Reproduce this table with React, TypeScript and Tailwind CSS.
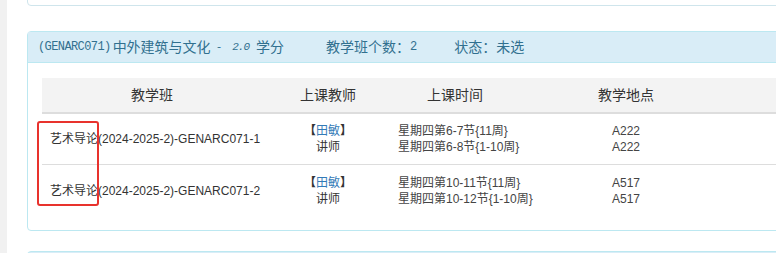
import React from "react";

const cjk = '"Liberation Sans", "Noto Sans CJK SC", sans-serif';
const mono = '"Liberation Mono", "Noto Sans CJK SC", monospace';

type Row = {
  name: string;
  times: string[];
  rooms: string[];
};

const rows: Row[] = [
  {
    name: "艺术导论(2024-2025-2)-GENARC071-1",
    times: ["星期四第6-7节{11周}", "星期四第6-8节{1-10周}"],
    rooms: ["A222", "A222"],
  },
  {
    name: "艺术导论(2024-2025-2)-GENARC071-2",
    times: ["星期四第10-11节{11周}", "星期四第10-12节{1-10周}"],
    rooms: ["A517", "A517"],
  },
];

function CourseTable() {
  return (
    <div className="relative w-[740px]">
      {/* header */}
      <div className="flex h-[36px] items-center border-b-2 border-[#dddddd] bg-[#f3f3f3] text-[14px] text-[#333]">
        <div className="w-[220px] text-center">教学班</div>
        <div className="w-[132px] text-center">上课教师</div>
        <div className="w-[122px] text-center">上课时间</div>
        <div className="w-[220px] text-center">教学地点</div>
      </div>
      {rows.map((r, i) => (
        <div
          key={r.name}
          className={
            "flex h-[51px] items-center text-[12px] leading-[16px] text-[#333] " +
            (i === 0 ? "border-b border-[#dddddd]" : "")
          }
        >
          <div className="w-[220px] pl-[8px]">{r.name}</div>
          <div className="flex w-[132px] flex-col items-center">
            <div>
              <span className="font-bold">【</span>
              <span className="text-[#337ab7]">田敏</span>
              <span className="font-bold">】</span>
            </div>
            <div>讲师</div>
          </div>
          <div className="w-[122px] pl-[4px] text-[#444]">
            {r.times.map((t) => (
              <div key={t} className="whitespace-nowrap">
                {t}
              </div>
            ))}
          </div>
          <div className="w-[220px] text-center text-[#444]">
            {r.rooms.map((t, k) => (
              <div key={k}>{t}</div>
            ))}
          </div>
        </div>
      ))}
      {/* highlight frame around the course name */}
      <div className="pointer-events-none absolute left-[-5px] top-[43px] h-[85px] w-[62px] rounded-[3px] border-[2.5px] border-[#e8322d]" />
    </div>
  );
}

export default function App() {
  return (
    <div
      className="flex h-[253px] w-[776px] overflow-hidden bg-white"
      style={{ fontFamily: cjk }}
    >
      <div className="w-[7px] shrink-0 bg-[#f1f1f1]" />
      <div className="flex min-w-0 flex-1 flex-col pl-[20px]">
        {/* previous panel, bottom edge only */}
        <div className="-mt-[10px] h-[16px] w-[800px] shrink-0 rounded-b-[4px] border border-[#cfe5ec] bg-white" />

        {/* course panel */}
        <div className="mt-[25px] w-[800px] shrink-0 rounded-[4px] border border-[#bce8f1] bg-white">
          <div className="flex h-[31px] items-center border-b border-[#bce8f1] bg-[#d9edf7] pl-[10px] text-[14px] text-[#31708f]">
            <span className="text-[12px] tracking-[-0.6px]" style={{ fontFamily: mono }}>
              (GENARC071)
            </span>
            <span className="ml-[2px]">中外建筑与文化</span>
            <span className="ml-[5px] text-[11px]" style={{ fontFamily: mono }}>
              -
            </span>
            <span className="ml-[10px] text-[11px] tracking-[-1px] italic" style={{ fontFamily: mono }}>
              2.0
            </span>
            <span className="ml-[7px]">学分</span>
            <span className="ml-[42px]">教学班个数：</span>
            <span className="text-[12px]" style={{ fontFamily: mono }}>
              2
            </span>
            <span className="ml-[37px]">状态：未选</span>
          </div>
          <div className="pb-[14px] pl-[14px] pt-[15px]">
            <CourseTable />
          </div>
        </div>

        {/* next panel, top edge */}
        <div className="mt-[20px] h-[40px] w-[800px] shrink-0 rounded-t-[4px] border border-[#bce8f1] bg-[#d9edf7]" />
      </div>
    </div>
  );
}
